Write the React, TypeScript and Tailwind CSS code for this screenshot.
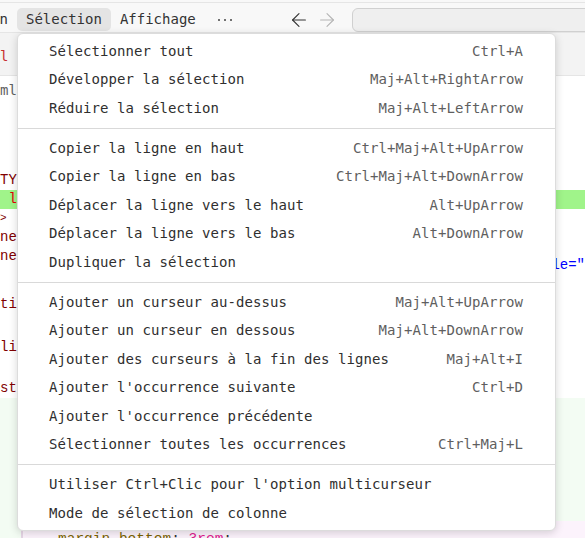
import { ArrowLeft, ArrowRight } from 'lucide-react'

type Item = { label: string; keys?: string }

const groups: Item[][] = [
  [
    { label: 'Sélectionner tout', keys: 'Ctrl+A' },
    { label: 'Développer la sélection', keys: 'Maj+Alt+RightArrow' },
    { label: 'Réduire la sélection', keys: 'Maj+Alt+LeftArrow' },
  ],
  [
    { label: 'Copier la ligne en haut', keys: 'Ctrl+Maj+Alt+UpArrow' },
    { label: 'Copier la ligne en bas', keys: 'Ctrl+Maj+Alt+DownArrow' },
    { label: 'Déplacer la ligne vers le haut', keys: 'Alt+UpArrow' },
    { label: 'Déplacer la ligne vers le bas', keys: 'Alt+DownArrow' },
    { label: 'Dupliquer la sélection' },
  ],
  [
    { label: 'Ajouter un curseur au-dessus', keys: 'Maj+Alt+UpArrow' },
    { label: 'Ajouter un curseur en dessous', keys: 'Maj+Alt+DownArrow' },
    { label: 'Ajouter des curseurs à la fin des lignes', keys: 'Maj+Alt+I' },
    { label: "Ajouter l'occurrence suivante", keys: 'Ctrl+D' },
    { label: "Ajouter l'occurrence précédente" },
    { label: 'Sélectionner toutes les occurrences', keys: 'Ctrl+Maj+L' },
  ],
  [
    { label: "Utiliser Ctrl+Clic pour l'option multicurseur" },
    { label: 'Mode de sélection de colonne' },
  ],
]

const MenuBar = () => (
  <div className="bg-[#f8f8f8] pt-[2px]">
    <div className="h-[31px] border-t border-b border-[#e5e5e5] flex items-start pt-[5px] text-[14px] text-[#333333]">
      <div className="ml-[-60px] px-[9px] h-[23px] flex items-center">Edition</div>
      <div className="px-[9px] h-[23px] flex items-center bg-[#e4e4e4] rounded-[5px]">Sélection</div>
      <div className="px-[9px] h-[23px] flex items-center">Affichage</div>
      <div className="w-[41px] h-[23px] flex items-center justify-center gap-[4px]">
        <span className="size-[2px] rounded-full bg-[#444]" />
        <span className="size-[2px] rounded-full bg-[#444]" />
        <span className="size-[2px] rounded-full bg-[#444]" />
      </div>
      <ArrowLeft size={22} strokeWidth={1.2} className="ml-[42px] mt-[1px] text-[#333]" />
      <ArrowRight size={22} strokeWidth={1.2} className="ml-[6px] mt-[1px] text-[#b4b4b4]" />
      <div className="ml-[14px] h-[24px] flex-1 mr-[-20px] rounded-[6px] border border-[#d0d0d0] bg-[#efefef]" />
    </div>
  </div>
)

const CodeLine = ({ left, leftColor, right, highlight }: { left?: string; leftColor?: string; right?: string; highlight?: boolean }) => (
  <div className={`h-[19px] flex items-center whitespace-pre ${highlight ? 'bg-[#a0f48a]' : ''}`}>
    <span className={`inline-block w-[557px] ${leftColor ?? ''}`}>{left}</span>
    {right && <span className="text-[#0000ff] pt-[18px]">{right}</span>}
  </div>
)

const Editor = () => (
  <div className="font-['Liberation_Mono',monospace] text-[14px]">
    {/* tabs */}
    <div className="h-[43px] bg-[#f3f3f3] border-b border-[#e5e5e5] flex items-center pt-[4px]">
      <span className="font-['DejaVu_Sans_Mono',monospace] text-[#c72e2e]">l</span>
    </div>
    {/* breadcrumb */}
    <div className="h-[28px] flex items-center font-['DejaVu_Sans_Mono',monospace] text-[#616161]">ml</div>
    <div className="h-[67px]" />
    <CodeLine left="TY" leftColor="text-[#800000]" />
    <CodeLine left=" la" leftColor="text-[#e50000]" highlight />
    <CodeLine left=">" leftColor="text-[#800000] text-[11px]" />
    <CodeLine left="ne" leftColor="text-[#800000]" />
    <CodeLine left="ne" leftColor="text-[#800000]" right={'le="'} />
    <div className="h-[29px]" />
    <CodeLine left="ti" leftColor="text-[#800000]" />
    <div className="h-[24px]" />
    <CodeLine left="li" leftColor="text-[#800000]" />
    <div className="h-[22px]" />
    <CodeLine left="st" leftColor="text-[#800000]" />
    {/* embedded css block */}
    <div className="h-[200px] bg-[#f3fcf3] pt-[123px]">
      <div className="ml-[21px] h-[60px] border-l-2 border-[#e6d6e6] bg-[#fcf3fc] pt-[8px] pl-[35px] whitespace-pre text-[14.5px]">
        <span className="text-[#7a6300]">margin-bottom</span>
        <span className="text-[#333]">: </span>
        <span className="text-[#e0208f]">3rem</span>
        <span className="text-[#333]">;</span>
      </div>
    </div>
  </div>
)

const SelectionMenu = () => (
  <div className="absolute left-[17px] top-[33px] w-[539px] bg-white border border-[#dcdcdc] rounded-[6px] shadow-[0_2px_8px_rgba(0,0,0,0.16)] pt-[3px] pb-[2px] text-[14px] tracking-[0.07px] font-['DejaVu_Sans_Mono',monospace]">
    {groups.map((group, gi) => (
      <div key={gi}>
        {gi > 0 && <div className="h-px bg-[#d9d9d9] my-[5.25px]" />}
        {group.map((item) => (
          <div key={item.label} className="h-[28.5px] flex items-center justify-between pl-[31px] pr-[32px] whitespace-pre">
            <span className="text-[#2f2f2f]">{item.label}</span>
            {item.keys && <span className="text-[#5f5f5f]">{item.keys}</span>}
          </div>
        ))}
      </div>
    ))}
  </div>
)

export default function App() {
  return (
    <div className="relative w-[585px] h-[538px] overflow-hidden bg-white font-['DejaVu_Sans_Mono',monospace]">
      <MenuBar />
      <Editor />
      <SelectionMenu />
    </div>
  )
}
